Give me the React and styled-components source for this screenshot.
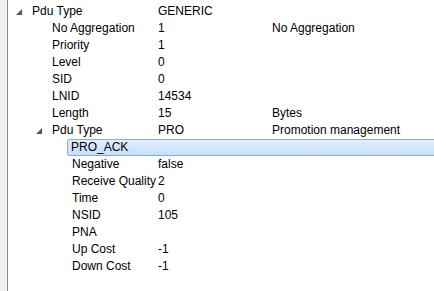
import styled, { createGlobalStyle } from "styled-components";

const GlobalStyle = createGlobalStyle`
    html, body {
        margin: 0;
        padding: 0;
        background: #ffffff;
    }
    body {
        font-family: "Liberation Sans", Arial, sans-serif;
        font-size: 12px;
        color: #000000;
    }
`;

const Page = styled.div`
    display: flex;
    height: 100vh;
    overflow: hidden;
`;

const Gutter = styled.div`
    width: 7px;
    background: #f0f0f0;
    border-right: 1px solid #828790;
`;

const Tree = styled.div`
    flex: 1;
    padding-top: 3px;
    overflow: hidden;
`;

const Row = styled.div`
    display: flex;
    height: 17px;
`;

const Spacer = styled.div`
    flex: none;
    width: ${(p) => 5 + p.$level * 20}px;
`;

const Expander = styled.div`
    flex: none;
    width: 14px;
    display: flex;
    align-items: center;
    padding-left: 3px;
    box-sizing: border-box;
`;

const Content = styled.div`
    flex: 1;
    display: grid;
    grid-template-columns: ${(p) => 126 - p.$level * 20}px 114px 1fr;
    align-items: center;
    box-sizing: border-box;
    line-height: 15px;
    white-space: nowrap;
    padding-left: 4px;
    border: 1px solid transparent;
    border-radius: 2px;
    margin-right: -6px;

    ${(p) => p.$selected && `
        border-color: #84acdd;
        background: linear-gradient(to bottom, #e1eefd, #c9defa);
        padding-left: 3px;
    `}
`;

const Cell = styled.span`
    overflow: visible;
`;

const Arrow = () => (
    <svg width="6" height="6" viewBox="0 0 6 6">
        <polygon points="6,0 6,6 0,6" fill="#595959" />
    </svg>
);

const items = [
    { level: 0, label: "Pdu Type", value: "GENERIC", open: true },
    { level: 1, label: "No Aggregation", value: "1", desc: "No Aggregation" },
    { level: 1, label: "Priority", value: "1" },
    { level: 1, label: "Level", value: "0" },
    { level: 1, label: "SID", value: "0" },
    { level: 1, label: "LNID", value: "14534" },
    { level: 1, label: "Length", value: "15", desc: "Bytes" },
    { level: 1, label: "Pdu Type", value: "PRO", desc: "Promotion management", open: true },
    { level: 2, label: "PRO_ACK", selected: true },
    { level: 2, label: "Negative", value: "false" },
    { level: 2, label: "Receive Quality", value: "2" },
    { level: 2, label: "Time", value: "0" },
    { level: 2, label: "NSID", value: "105" },
    { level: 2, label: "PNA" },
    { level: 2, label: "Up Cost", value: "-1" },
    { level: 2, label: "Down Cost", value: "-1" },
];

const App = () => {
    return (
        <>
            <GlobalStyle />
            <Page>
                <Gutter />
                <Tree>
                    {items.map((item, i) => (
                        <Row key={i}>
                            <Spacer $level={item.level} />
                            <Expander>{item.open && <Arrow />}</Expander>
                            <Content $level={item.level} $selected={item.selected}>
                                <Cell>{item.label}</Cell>
                                <Cell>{item.value}</Cell>
                                <Cell>{item.desc}</Cell>
                            </Content>
                        </Row>
                    ))}
                </Tree>
            </Page>
        </>
    );
};

export default App;
